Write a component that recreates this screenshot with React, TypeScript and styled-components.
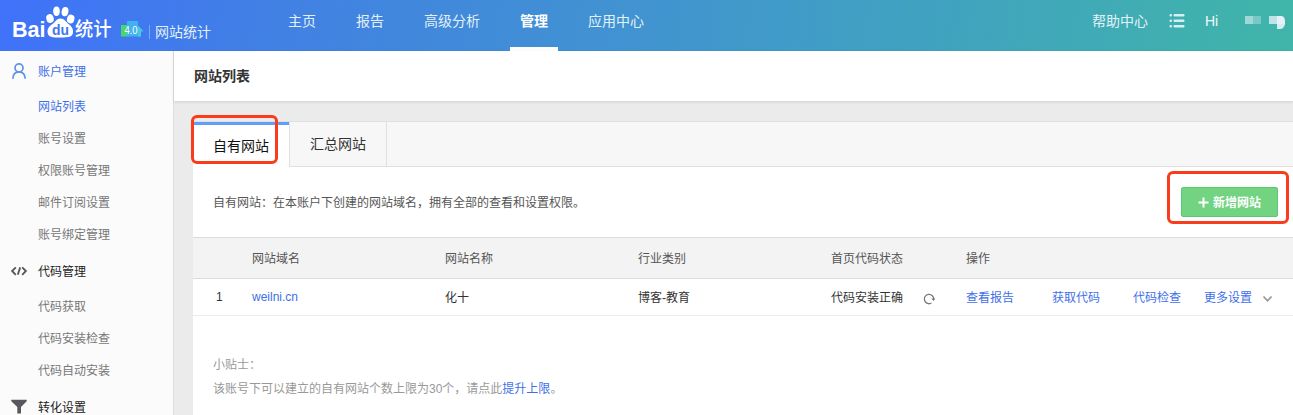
import React from 'react';
import styled, { createGlobalStyle, css } from 'styled-components';

const Global = createGlobalStyle`
  * { box-sizing: border-box; }
  body {
    margin: 0;
    overflow: hidden;
    background: #ebebeb;
    font-family: "Liberation Sans", "Noto Sans CJK SC", sans-serif;
    font-size: 12px;
    color: #333;
  }
  a { text-decoration: none; color: #3e6fe8; }
`;

const Page = styled.div`
  height: 415px;
  overflow: hidden;
  display: flex;
  flex-direction: column;
`;

const TopBar = styled.header`
  height: 51px;
  flex: none;
  display: flex;
  background: linear-gradient(98deg, #4072fa 0%, #4180e4 21%, #4194d0 50%, #40a9b8 82%, #40b5a8 100%);
  color: #e2f1f8;
  font-size: 14px;
  line-height: 42px;
`;

const Brand = styled.div`
  width: 278px;
  display: flex;
`;

const Logo = styled.svg`
  width: 148px;
  height: 51px;
  flex: none;
`;

const Product = styled.span`
  height: 14px;
  margin: 25px 0 0 1px;
  padding-left: 5px;
  border-left: 1px solid #7ea8f2;
  line-height: 14px;
`;

const Nav = styled.nav`
  display: flex;
  gap: 20px;
  flex: 1;
`;

const NavItem = styled.a<{ $active?: boolean }>`
  height: 51px;
  padding: 0 10px;
  color: inherit;
  ${(p) => p.$active && css`
    color: #fff;
    font-weight: 700;
    border-bottom: 4px solid #fff;
  `}
`;

const UserArea = styled.div`
  width: 201px;
  display: flex;
`;

const MenuIcon = styled.svg`
  width: 16px;
  height: 14px;
  margin: 14px 20px 0 21px;
`;

const Greeting = styled.span`
  color: #f2fafa;
`;

const MaskedName = styled.svg`
  width: 42px;
  height: 16px;
  margin: 14px 0 0 26px;
`;

const Body = styled.div`
  flex: 1;
  display: flex;
  min-height: 0;
`;

const Sidebar = styled.aside`
  width: 174px;
  flex: none;
  overflow: hidden;
  background: #fbfbfb;
  border-right: 1px solid #dedede;
`;

const GroupTitle = styled.div<{ $active?: boolean }>`
  height: 40px;
  display: flex;
  align-items: center;
  gap: 10px;
  padding-left: 10px;
  color: ${(p) => (p.$active ? '#3e6fe8' : '#222')};
  svg { width: 18px; height: 18px; flex: none; }
  span { padding-bottom: 2px; }
`;

const SideItem = styled.a<{ $active?: boolean }>`
  display: block;
  height: 32px;
  padding-left: 38px;
  line-height: 33px;
  color: ${(p) => (p.$active ? '#3e6fe8' : '#777')};
`;

const Main = styled.main`
  flex: 1;
  min-width: 0;
`;

const TitleBar = styled.h1`
  height: 50px;
  margin: 0 0 20px;
  padding-left: 20px;
  background: #fff;
  box-shadow: 0 1px 3px rgba(0, 0, 0, 0.12);
  font-size: 14px;
  line-height: 50px;
`;

const Panel = styled.section`
  height: 300px;
  margin-left: 19px;
  background: #fff;
`;

const Tabs = styled.div`
  height: 46px;
  display: flex;
  border-top: 1px solid #e0e0e0;
  background: #f7f7f7;
  font-size: 14px;
`;

const Tab = styled.div<{ $active?: boolean }>`
  position: relative;
  width: ${(p) => (p.$active ? 96 : 98)}px;
  line-height: 44px;
  padding-left: 20px;
  border: solid #e0e0e0;
  border-width: 0 1px 1px;
  ${(p) => p.$active && css`
    border: 0;
    border-top: 3px solid #639dfa;
    background: #fff;
    color: #111;
    line-height: 42px;
  `}
`;

const TabRest = styled.div`
  flex: 1;
  border-bottom: 1px solid #e0e0e0;
`;

const Highlight = styled.span<{ $w: number; $h: number; $x: number; $y: number }>`
  position: absolute;
  left: ${(p) => p.$x}px;
  top: ${(p) => p.$y}px;
  width: ${(p) => p.$w}px;
  height: ${(p) => p.$h}px;
  border: 3px solid #f83c1c;
  border-radius: 6px;
  pointer-events: none;
`;

const Intro = styled.div`
  height: 70px;
  display: flex;
  align-items: center;
  justify-content: space-between;
  padding: 0 15px 0 20px;
  color: #555;
`;

const Raised = styled.span`
  padding-bottom: 2px;
`;

const AddButton = styled.button`
  position: relative;
  width: 97px;
  height: 30px;
  display: flex;
  align-items: center;
  gap: 4px;
  padding: 0 0 0 16px;
  border: 1px solid #5cc873;
  border-radius: 2px;
  background: #72d481;
  color: #fff;
  font: inherit;
  font-weight: 700;
  svg { width: 11px; height: 11px; flex: none; }
`;

const Row = styled.div<{ $head?: boolean }>`
  display: grid;
  grid-template-columns: 36px 193px 193px 193px 135px 1fr;
  align-items: center;
  height: 37px;
  padding-left: 23px;
  border-bottom: 1px solid #ebebeb;
  ${(p) => p.$head && css`
    height: 42px;
    background: #f3f3f3;
    border: solid #dcdcdc;
    border-width: 1px 0;
    color: #555;
  `}
`;

const Status = styled.span`
  display: flex;
  align-items: center;
  gap: 20px;
  padding-bottom: 2px;
  svg { width: 12px; height: 12px; margin-top: 6px; }
`;

const Actions = styled.span`
  display: grid;
  grid-template-columns: 86px 81px 71px 58px 12px;
  align-items: center;
  padding-bottom: 2px;
  svg { width: 11px; height: 8px; margin-top: 5px; }
`;

const Tips = styled.div`
  padding: 37px 20px 0;
  line-height: 24px;
  color: #999;
`;

const UserIcon = () => (
  <svg viewBox="0 0 18 18" fill="none" stroke="#5d92e8" strokeWidth="1.7">
    <circle cx="9" cy="5.9" r="4" />
    <path d="M2.8 16.8C3 12.4 5.3 9.9 9 9.900s6 2.500 6.200 6.900" />
  </svg>
);

const CodeIcon = () => (
  <svg viewBox="0 0 18 18" fill="none" stroke="#555" strokeWidth="1.800">
    <path d="M5.800 5.300 2.100 9l3.700 3.800M12.200 5.300 15.900 9l-3.700 3.800M10.200 5.400 7.800 12.600" />
  </svg>
);

const FilterIcon = () => (
  <svg viewBox="0 0 18 18" fill="#57575f">
    <path d="M1.300 1.800h15.400v1.500L11 9.100v6.300H7.300V9.100L1.300 3.300z" />
  </svg>
);

const groups = [
  { title: '账户管理', icon: <UserIcon />, active: true, items: ['网站列表', '账号设置', '权限账号管理', '邮件订阅设置', '账号绑定管理'] },
  { title: '代码管理', icon: <CodeIcon />, items: ['代码获取', '代码安装检查', '代码自动安装'] },
  { title: '转化设置', icon: <FilterIcon />, items: [] },
];

const BrandLogo = () => (
  <Logo viewBox="0 0 148 51">
    <g fill="#fff" fontFamily='"Liberation Sans", "Noto Sans CJK SC", sans-serif'>
      <text x="12" y="36.500" fontSize="22.500" fontWeight="700" textLength="33.500" lengthAdjust="spacingAndGlyphs">Bai</text>
      <ellipse cx="50" cy="18.500" rx="3.700" ry="4.500" transform="rotate(-15 50 18.500)" />
      <ellipse cx="56.500" cy="11.300" rx="3.300" ry="4.700" />
      <ellipse cx="65" cy="11.600" rx="3.400" ry="4.700" transform="rotate(10 65 11.600)" />
      <ellipse cx="70.700" cy="19" rx="3.700" ry="4.500" transform="rotate(15 70.700 19)" />
      <path d="M60.500 18.500c4 0 5.500 3.500 8 5.500s5 4.500 4.500 8.500c-.6 4.500-4 5-12.500 5s-12.300-.3-12.900-5c-.5-4 2-6.500 4.900-8.500s4-5.500 8-5.500z" />
      <text x="52" y="35" fontSize="14" fontWeight="700" fill="#4077ee" textLength="17" lengthAdjust="spacingAndGlyphs">du</text>
      <text x="75" y="35.500" fontSize="19.500" fontWeight="500" textLength="36.500" lengthAdjust="spacingAndGlyphs">统计</text>
      <path d="M121 25h8v11.500h-8z" fill="#4bd571" />
      <path d="M127 21h11v4.500l5.300 5.800H141v5.200h-14z" fill="#40b2f0" />
      <path d="M138 25.500l5.300 5.800H141v5.200h-3z" fill="#45c9de" />
      <text x="124.500" y="33.800" fontSize="10" textLength="13" lengthAdjust="spacingAndGlyphs">4.0</text>
    </g>
  </Logo>
);

export default function App() {
  return (
    <Page>
      <Global />
      <TopBar>
        <Brand>
          <BrandLogo />
          <Product>网站统计</Product>
        </Brand>
        <Nav>
          {['主页', '报告', '高级分析', '管理', '应用中心'].map((n) => (
            <NavItem key={n} $active={n === '管理'}>{n}</NavItem>
          ))}
        </Nav>
        <UserArea>
          <span>帮助中心</span>
          <MenuIcon viewBox="0 0 16 14" fill="#d6eff0">
            <rect x="0.500" width="2.500" height="2.500" rx="1" />
            <rect x="0.500" y="5.500" width="2.500" height="2.500" rx="1" />
            <rect x="0.500" y="11" width="2.500" height="2.500" rx="1" />
            <rect x="4.500" width="11" height="2.500" rx="1" />
            <rect x="4.500" y="5.500" width="11" height="2.500" rx="1" />
            <rect x="4.500" y="11" width="11" height="2.500" rx="1" />
          </MenuIcon>
          <Greeting>Hi</Greeting>
          <MaskedName viewBox="0 0 42 16">
            <path d="M1 2h8v8H1z" fill="#a0d8d8" />
            <path d="M9 2h8v8H9z" fill="#79c8c7" />
            <path d="M25 2h8v8h-8z" fill="#bfe3e8" />
            <path d="M33 2h5q3 1 3 5v3h-8z" fill="#e5f0f8" />
            <path d="M33 10h8q-1 5-5 5h-3z" fill="#d5edf0" />
          </MaskedName>
        </UserArea>
      </TopBar>
      <Body>
        <Sidebar>
          {groups.map((g) => (
            <div key={g.title}>
              <GroupTitle $active={g.active}>{g.icon}<span>{g.title}</span></GroupTitle>
              {g.items.map((t) => <SideItem key={t} $active={t === '网站列表'}>{t}</SideItem>)}
            </div>
          ))}
        </Sidebar>
        <Main>
          <TitleBar>网站列表</TitleBar>
          <Panel>
            <Tabs>
              <Tab $active>自有网站<Highlight $x={-2} $y={-10} $w={87} $h={49} /></Tab>
              <Tab>汇总网站</Tab>
              <TabRest />
            </Tabs>
            <Intro>
              <Raised>自有网站：在本账户下创建的网站域名，拥有全部的查看和设置权限。</Raised>
              <AddButton>
                <svg viewBox="0 0 11 11" stroke="#fff" strokeWidth="2"><path d="M5.500 .5v10M.5 5.500h10" /></svg>
                <Raised>新增网站</Raised>
                <Highlight $x={-15} $y={-17} $w={122} $h={53} />
              </AddButton>
            </Intro>
            <Row $head>
              <span />
              {['网站域名', '网站名称', '行业类别', '首页代码状态', '操作'].map((t) => <Raised key={t}>{t}</Raised>)}
            </Row>
            <Row>
              <span>1</span>
              <a>weilni.cn</a>
              <Raised>化十</Raised>
              <Raised>博客-教育</Raised>
              <Status>
                代码安装正确
                <svg viewBox="0 0 12 12" fill="none" stroke="#777" strokeWidth="1.300">
                  <path d="M8.500 10A4.700 4.700 0 1 1 10.700 6.500" />
                  <path d="M8.300 5.500h4l-1.800 2.500z" fill="#777" stroke="none" />
                </svg>
              </Status>
              <Actions>
                <a>查看报告</a><a>获取代码</a><a>代码检查</a><a>更多设置</a>
                <svg viewBox="0 0 11 8" fill="none" stroke="#999" strokeWidth="1.800"><path d="M1.500 1.500 5.500 5.800 9.500 1.500" /></svg>
              </Actions>
            </Row>
            <Tips>
              <div>小贴士：</div>
              <div>该账号下可以建立的自有网站个数上限为30个，请点此<a>提升上限</a>。</div>
            </Tips>
          </Panel>
        </Main>
      </Body>
    </Page>
  );
}
